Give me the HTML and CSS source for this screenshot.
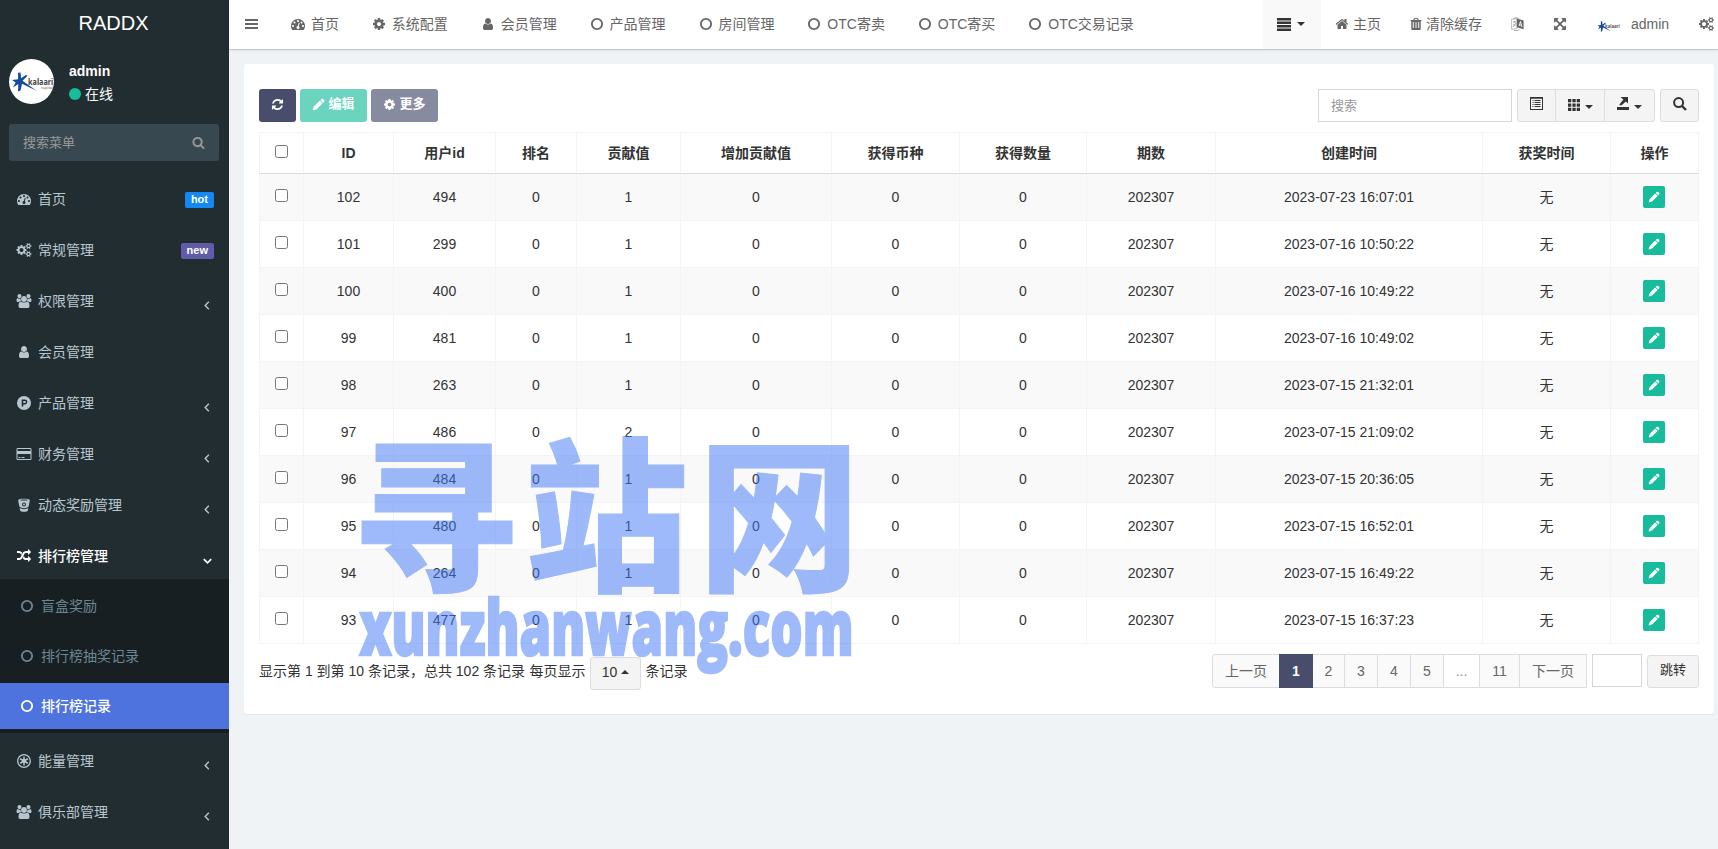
FILE: index.html
```
<!DOCTYPE html>
<html lang="zh">
<head>
<meta charset="utf-8">
<title>RADDX</title>
<link rel="stylesheet" href="styles.css">
</head>
<body>
<svg class="defs" aria-hidden="true">
<symbol id="dash" viewBox="0 0 1792 1792"><path d="M384 1152q0-53-37.5-90.5t-90.5-37.5-90.5 37.5-37.5 90.5 37.5 90.5 90.5 37.5 90.5-37.5 37.5-90.5zm192-448q0-53-37.5-90.5t-90.5-37.5-90.5 37.5-37.5 90.5 37.5 90.5 90.5 37.5 90.5-37.5 37.5-90.5zm428 481l101-382q6-26-7.5-48.5t-38.5-29.5-48 6.5-30 39.5l-101 382q-60 5-107 43.5t-63 98.5q-20 77 20 146t117 89 146-20 89-117q16-60-6-117t-72-91zm660-33q0-53-37.5-90.5t-90.5-37.5-90.5 37.5-37.5 90.5 37.5 90.5 90.5 37.5 90.5-37.5 37.5-90.5zm-640-640q0-53-37.5-90.5t-90.5-37.5-90.5 37.5-37.5 90.5 37.5 90.5 90.5 37.5 90.5-37.5 37.5-90.5zm448 192q0-53-37.5-90.5t-90.5-37.5-90.5 37.5-37.5 90.5 37.5 90.5 90.5 37.5 90.5-37.5 37.5-90.5zm320 448q0 261-141 483-19 29-54 29h-1402q-35 0-54-29-141-221-141-483 0-182 71-348t191-286 286-191 348-71 348 71 286 191 191 286 71 348z"/></symbol>
<symbol id="cog" viewBox="0 0 1792 1792"><path d="M1152 896q0-106-75-181t-181-75-181 75-75 181 75 181 181 75 181-75 75-181zm512-109v222q0 12-8 23t-20 13l-185 28q-19 54-39 91 35 50 107 138 10 12 10 25t-9 23q-27 37-99 108t-94 71q-12 0-26-9l-138-108q-44 23-91 38-16 136-29 186-7 28-36 28h-222q-14 0-24.5-8.5t-11.5-21.5l-28-184q-49-16-90-37l-141 107q-10 9-25 9-14 0-25-11-126-114-165-168-7-10-7-23 0-12 8-23 15-21 51-66.5t54-70.5q-27-50-41-99l-183-27q-13-2-21-12.5t-8-23.5v-222q0-12 8-23t19-13l186-28q14-46 39-92-40-57-107-138-10-12-10-24 0-10 9-23 26-36 98.5-107.5t94.5-71.5q13 0 26 10l138 107q44-23 91-38 16-136 29-186 7-28 36-28h222q14 0 24.5 8.5t11.5 21.5l28 184q49 16 90 37l142-107q9-9 24-9 13 0 25 10 129 119 165 170 7 8 7 22 0 12-8 23-15 21-51 66.5t-54 70.5q26 50 41 98l183 28q13 2 21 12.5t8 23.5z"/></symbol>
<symbol id="user" viewBox="0 0 1792 1792"><path d="M1536 1399q0 109-62.5 187t-150.5 78h-854q-88 0-150.5-78t-62.5-187q0-85 8.5-160.5t31.5-152 58.5-131 94-89 134.5-34.5q131 128 313 128t313-128q76 0 134.5 34.5t94 89 58.5 131 31.5 152 8.5 160.5zm-256-887q0 159-112.5 271.5t-271.5 112.5-271.5-112.5-112.5-271.5 112.5-271.5 271.5-112.5 271.5 112.5 112.5 271.5z"/></symbol>
<symbol id="ring" viewBox="0 0 1792 1792"><circle cx="896" cy="896" r="656" fill="none" stroke="currentColor" stroke-width="240"/></symbol>
<symbol id="home" viewBox="0 0 1792 1792"><path d="M1472 992v480q0 26-19 45t-45 19h-384v-384h-256v384h-384q-26 0-45-19t-19-45v-480q0-1 .5-3t.5-3l575-474 575 474q1 2 1 6zm223-69l-62 74q-8 9-21 11h-3q-13 0-21-7l-692-577-692 577q-12 8-24 7-13-2-21-11l-62-74q-8-10-7-23.5t11-21.5l719-599q32-26 76-26t76 26l244 204v-195q0-14 9-23t23-9h192q14 0 23 9t9 23v408l219 182q10 8 11 21.5t-7 23.5z"/></symbol>
<symbol id="trash" viewBox="0 0 1792 1792"><path fill-rule="evenodd" d="M192 384h350l75-180q20-76 100-76h358q80 0 100 76l75 180h350v128h-96v960q0 192-128 192H416q-128 0-128-192V512h-96zm496 0h416l-50-120H738zM480 640v768h128V640zm352 0v768h128V640zm352 0v768h128V640z"/></symbol>
<symbol id="arrows" viewBox="0 0 1792 1792"><path d="M1411 541l-355 355 355 355 144-144q29-31 70-14 39 17 39 59v448q0 26-19 45t-45 19h-448q-42 0-59-40-17-39 14-69l144-144-355-355-355 355 144 144q31 30 14 69-17 40-59 40h-448q-26 0-45-19t-19-45v-448q0-42 40-59 39-17 69 14l144 144 355-355-355-355-144 144q-19 19-45 19-12 0-24-5-40-17-40-59v-448q0-26 19-45t45-19h448q42 0 59 40 17 39-14 69l-144 144 355 355 355-355-144-144q-31-30-14-69 17-40 59-40h448q26 0 45 19t19 45v448q0 42-39 59-13 5-25 5-26 0-45-19z"/></symbol>
<symbol id="cogs" viewBox="0 0 1920 1792"><path d="M896 896q0-106-75-181t-181-75-181 75-75 181 75 181 181 75 181-75 75-181zm768 512q0-52-38-90t-90-38-90 38-38 90q0 53 37.5 90.5t90.5 37.5 90.5-37.5 37.5-90.5zm0-1024q0-52-38-90t-90-38-90 38-38 90q0 53 37.5 90.5t90.5 37.5 90.5-37.5 37.5-90.5zm-384 421v185q0 10-7 19.5t-16 10.5l-155 24q-11 35-32 76 34 48 90 115 7 11 7 20 0 12-7 19-23 30-82.5 89.5t-78.5 59.5q-11 0-21-7l-115-90q-37 19-77 31-11 108-23 155-7 24-30 24h-186q-11 0-20-7.5t-10-17.5l-23-153q-34-10-75-31l-118 89q-7 7-20 7-11 0-21-8-144-133-144-160 0-9 7-19 10-14 41-53t47-61q-23-44-35-82l-152-24q-10-1-17-9.5t-7-19.5v-185q0-10 7-19.5t16-10.5l155-24q11-35 32-76-34-48-90-115-7-11-7-20 0-12 7-20 22-30 82-89t79-59q11 0 21 7l115 90q34-18 77-32 11-108 23-154 7-24 30-24h186q11 0 20 7.5t10 17.5l23 153q34 10 75 31l118-89q8-7 20-7 11 0 21 8 144 133 144 160 0 8-7 19-12 16-42 54t-45 60q23 48 34 82l152 23q10 2 17 10.5t7 19.5zm640 533v140q0 16-149 31-12 27-30 52 51 113 51 138 0 4-4 7-122 71-124 71-8 0-46-47t-52-68q-20 2-30 2t-30-2q-14 21-52 68t-46 47q-2 0-124-71-4-3-4-7 0-25 51-138-18-25-30-52-149-15-149-31v-140q0-16 149-31 13-29 30-52-51-113-51-138 0-4 4-7 4-2 35-20t59-34 30-16q8 0 46 46.5t52 67.5q20-2 30-2t30 2q51-71 92-112l6-2q4 0 124 70 4 3 4 7 0 25-51 138 17 23 30 52 149 15 149 31zm0-1024v140q0 16-149 31-12 27-30 52 51 113 51 138 0 4-4 7-122 71-124 71-8 0-46-47t-52-68q-20 2-30 2t-30-2q-14 21-52 68t-46 47q-2 0-124-71-4-3-4-7 0-25 51-138-18-25-30-52-149-15-149-31v-140q0-16 149-31 13-29 30-52-51-113-51-138 0-4 4-7 4-2 35-20t59-34 30-16q8 0 46 46.5t52 67.5q20-2 30-2t30 2q51-71 92-112l6-2q4 0 124 70 4 3 4 7 0 25-51 138 17 23 30 52 149 15 149 31z"/></symbol>
<symbol id="group" viewBox="0 0 1920 1792"><path d="M593 896q-162 5-265 128h-134q-82 0-138-40.5t-56-118.5q0-353 124-353 6 0 43.5 21t97.5 42.5 119 21.5q67 0 133-23-5 37-5 66 0 139 81 256zm1071 637q0 120-73 189.5t-194 69.5h-874q-121 0-194-69.5t-73-189.5q0-53 3.5-103.5t14-109 26.5-108.5 43-97.5 62-81 85.5-53.5 111.5-20q10 0 43 21.5t73 48 107 48 135 21.5 135-21.5 107-48 73-48 43-21.5q61 0 111.5 20t85.5 53.5 62 81 43 97.5 26.5 108.5 14 109 3.5 103.5zm-1024-1277q0 106-75 181t-181 75-181-75-75-181 75-181 181-75 181 75 75 181zm704 384q0 159-112.5 271.5t-271.5 112.5-271.5-112.5-112.5-271.5 112.5-271.5 271.5-112.5 271.5 112.5 112.5 271.5zm576 225q0 78-56 118.5t-138 40.5h-134q-103-123-265-128 81-117 81-256 0-29-5-66 66 23 133 23 59 0 119-21.5t97.5-42.5 43.5-21q124 0 124 353zm-128-609q0 106-75 181t-181 75-181-75-75-181 75-181 181-75 181 75 75 181z"/></symbol>
<symbol id="random" viewBox="0 0 1792 1792"><path d="M666 481q-60 92-137 273-22-45-37-72.5t-40.5-63.5-51-56.5-63-35-81.5-14.5h-224q-14 0-23-9t-9-23v-192q0-14 9-23t23-9h224q250 0 410 225zm1126 799q0 14-9 23l-320 320q-9 9-23 9-13 0-22.5-9.5t-9.5-22.5v-192q-32 0-85 .5t-81 1-73-1-71-5-64-10.5-63-18.5-58-28.5-59-40-55-53.5-56-69.5q59-93 136-273 22 45 37 72.5t40.5 63.5 51 56.5 63 35 81.5 14.5h256v-192q0-14 9-23t23-9q12 0 24 10l319 319q9 9 9 23zm0-896q0 14-9 23l-320 320q-9 9-23 9-13 0-22.5-9.5t-9.5-22.5v-192h-256q-48 0-87 15t-69 45-51 61.5-45 77.5q-32 62-78 171-29 66-49.5 111t-54 105-64 100-74 83-90 68.5-106.5 42-128 16.5h-224q-14 0-23-9t-9-23v-192q0-14 9-23t23-9h224q48 0 87-15t69-45 51-61.5 45-77.5q32-62 78-171 29-66 49.5-111t54-105 64-100 74-83 90-68.5 106.5-42 128-16.5h256v-192q0-14 9-23t23-9q12 0 24 10l319 319q9 9 9 23z"/></symbol>
<symbol id="refresh" viewBox="0 0 1792 1792"><path d="M1639 1056q0 5-1 7-64 268-268 434.5t-478 166.5q-146 0-282.5-55t-243.5-157l-129 129q-19 19-45 19t-45-19-19-45v-448q0-26 19-45t45-19h448q26 0 45 19t19 45-19 45l-137 137q71 66 161 102t187 36q134 0 250-65t186-179q11-17 53-117 8-23 30-23h192q13 0 22.5 9.5t9.5 22.5zm25-800v448q0 26-19 45t-45 19h-448q-26 0-45-19t-19-45 19-45l138-138q-148-137-349-137-134 0-250 65t-186 179q-11 17-53 117-8 23-30 23h-199q-13 0-22.5-9.5t-9.5-22.5v-7q65-268 270-434.5t480-166.5q146 0 284 55.5t245 156.5l130-129q19-19 45-19t45 19 19 45z"/></symbol>
<symbol id="pencil" viewBox="0 0 12 12"><path d="M8.600 1.100q.9-.9 1.800 0l.7.7q.9.9 0 1.800l-.9.9-2.500-2.500zM7.100 2.600l2.500 2.500-5.300 5.200q-1.200.9-3.600 1.100.2-2.300 1.100-3.500z"/></symbol>
<symbol id="search" viewBox="0 0 1792 1792"><path d="M1216 832q0-185-131.5-316.5t-316.5-131.5-316.5 131.5-131.5 316.5 131.5 316.5 316.5 131.5 316.5-131.5 131.5-316.5zm512 832q0 52-38 90t-90 38q-54 0-90-38l-343-342q-179 124-399 124-143 0-273.5-55.5t-225-150-150-225-55.5-273.5 55.5-273.5 150-225 225-150 273.5-55.5 273.5 55.5 225 150 150 225 55.5 273.5q0 220-124 399l343 343q37 37 37 90z"/></symbol>
<symbol id="product" viewBox="0 0 14 14"><path fill-rule="evenodd" d="M7 0a7 7 0 1 1 0 14A7 7 0 0 1 7 0zM4.700 3.500v7h1.600V8.400h1.600a2.450 2.450 0 0 0 0-4.900zM6.300 5h1.600a.9.9 0 0 1 0 1.900H6.300z"/></symbol>
<symbol id="card" viewBox="0 0 15 14"><path fill-rule="evenodd" d="M1.200 1h12.600A1.200 1.200 0 0 1 15 2.200v9.600a1.200 1.200 0 0 1-1.200 1.200H1.200A1.200 1.200 0 0 1 0 11.800V2.200A1.200 1.200 0 0 1 1.200 1zM1 2v2h13V2zm0 5v5h13V7zm1 3h2v1H2zm3 0h3v1H5z"/></symbol>
<symbol id="bucket" viewBox="0 0 14 14"><path fill-rule="evenodd" d="M1.200 2C1.200.4 12.800.4 12.800 2c0 1-.8 5-1.200 6.600-.3.7-2 1.600-4.600 1.600S2.700 9.300 2.400 8.600C2 7 1.200 3 1.200 2zM3 2c0 .8 8 .8 8 0s-8-.8-8 0zm4 2.600a2 2 0 1 0 0 4 2 2 0 0 0 0-4z"/><circle cx="7" cy="6.600" r="1"/><path d="M2.600 10c2 1.500 6.800 1.500 8.800 0l-.5 2.500c-.6 1.800-7.200 1.800-7.800 0z"/></symbol>
<symbol id="empire" viewBox="0 0 14 14"><circle cx="7" cy="7" r="6.300" fill="none" stroke="currentColor" stroke-width="1.300"/><circle cx="7" cy="7" r="2.100"/><path d="M7 2.500v9M3.100 4.750l7.800 4.500M3.100 9.250l7.800-4.500" stroke="currentColor" stroke-width="1.500"/></symbol>
<symbol id="star-logo" viewBox="0 0 40 20"><path fill="#114a9f" d="M6 .8L8.500.5l.6 5.700L13.800 3l1.700.7-5 5L24.500 18.800 10 11.800 8.500 18.500 6 19.500l.3-7.500L1 15.500l2.600-5L0 8l6.200-.8z"/></symbol>
</svg>

<aside class="side">
  <div class="brand">RADDX</div>
  <div class="profile">
    <div class="avatar"><svg class="mark"><use href="#star-logo"/></svg><span class="mark-name">kalaari</span><span class="mark-sub">capital</span></div>
    <div class="who"><b>admin</b><span><i class="dot"></i>在线</span></div>
  </div>
  <div class="find"><span>搜索菜单</span><svg class="i13"><use href="#search"/></svg></div>
  <nav class="menu">
    <a><svg class="mi"><use href="#dash"/></svg>首页<em class="hot">hot</em></a>
    <a><svg class="mi"><use href="#cogs"/></svg>常规管理<em class="new">new</em></a>
    <a><svg class="mi"><use href="#group"/></svg>权限管理<svg class="ang" viewBox="0 0 6 9"><path d="M4.800.8L1.200 4.500l3.600 3.700"/></svg></a>
    <a><svg class="mi"><use href="#user"/></svg>会员管理</a>
    <a><svg class="mi"><use href="#product"/></svg>产品管理<svg class="ang" viewBox="0 0 6 9"><path d="M4.800.8L1.200 4.500l3.600 3.700"/></svg></a>
    <a><svg class="mi"><use href="#card"/></svg>财务管理<svg class="ang" viewBox="0 0 6 9"><path d="M4.800.8L1.200 4.500l3.600 3.700"/></svg></a>
    <a><svg class="mi"><use href="#bucket"/></svg>动态奖励管理<svg class="ang" viewBox="0 0 6 9"><path d="M4.800.8L1.200 4.500l3.600 3.700"/></svg></a>
    <a class="open"><svg class="mi"><use href="#random"/></svg>排行榜管理<svg class="ang down" viewBox="0 0 9 6"><path d="M.8 1.200l3.700 3.600 3.700-3.600"/></svg></a>
    <div class="sub">
      <a><svg class="i14"><use href="#ring"/></svg>盲盒奖励</a>
      <a><svg class="i14"><use href="#ring"/></svg>排行榜抽奖记录</a>
      <a class="on"><svg class="i14"><use href="#ring"/></svg>排行榜记录</a>
    </div>
    <a><svg class="mi"><use href="#empire"/></svg>能量管理<svg class="ang" viewBox="0 0 6 9"><path d="M4.800.8L1.200 4.500l3.600 3.700"/></svg></a>
    <a><svg class="mi"><use href="#group"/></svg>俱乐部管理<svg class="ang" viewBox="0 0 6 9"><path d="M4.800.8L1.200 4.500l3.600 3.700"/></svg></a>
  </nav>
</aside>

<div class="page">
<header class="top">
  <svg class="bars" viewBox="0 0 13 10"><path d="M0 0h13v2H0zM0 4h13v2H0zM0 8h13v2H0z"/></svg>
  <nav class="tabs">
    <a><svg class="ti"><use href="#dash"/></svg>首页</a>
    <a><svg class="ti"><use href="#cog"/></svg>系统配置</a>
    <a><svg class="ti"><use href="#user"/></svg>会员管理</a>
    <a><svg class="ti"><use href="#ring"/></svg>产品管理</a>
    <a><svg class="ti"><use href="#ring"/></svg>房间管理</a>
    <a><svg class="ti"><use href="#ring"/></svg>OTC寄卖</a>
    <a><svg class="ti"><use href="#ring"/></svg>OTC寄买</a>
    <a><svg class="ti"><use href="#ring"/></svg>OTC交易记录</a>
  </nav>
  <div class="tools">
    <div class="drop"><svg class="list" viewBox="0 0 14 13"><path d="M0 0h14v2.500H0zM0 3.500h14V6H0zM0 7h14v2.500H0zM0 10.500h14V13H0z"/></svg><i class="caret"></i></div>
    <a class="t-home"><svg class="i14"><use href="#home"/></svg>主页</a>
    <a class="t-clear"><svg class="i14"><use href="#trash"/></svg>清除缓存</a>
    <svg class="lang" viewBox="0 0 13 14"><path d="M.6 2.200l5.400-.6v9.800l-5.400.9z" fill="none" stroke="currentColor" stroke-width=".6" opacity=".7"/><path d="M2 5h3M3.500 4v1.500M2 10l3-4M2.500 7l2 2M2.500 1.500L6 .5l1.500 1M3 13.300l3.500.2 2-1" fill="none" stroke="currentColor" stroke-width=".7" opacity=".8"/><path d="M5.800 1.500L12.600 3.500v8.700L5.800 10.300z"/><path d="M8 9l1.500-4.500L11 10M8.500 7.800l2 .4" fill="none" stroke="#fff" stroke-width=".9"/></svg>
    <svg class="i14 t-full"><use href="#arrows"/></svg>
    <span class="mini"><svg class="mini-mark"><use href="#star-logo"/></svg><span>kalaari</span></span>
    <span class="t-name">admin</span>
    <svg class="t-cogs"><use href="#cogs"/></svg>
  </div>
</header>

<main class="panel">
  <div class="bar">
    <button class="btn dark"><svg class="i13"><use href="#refresh"/></svg></button>
    <button class="btn green"><svg class="i13"><use href="#pencil"/></svg>编辑</button>
    <button class="btn grey"><svg class="i13"><use href="#cog"/></svg>更多</button>
    <div class="query">搜索</div>
    <div class="group">
      <button><svg width="13" height="13" viewBox="0 0 13 13"><path fill-rule="evenodd" d="M0 0h13v13H0zm1 1.800V12h11V1.800zM2.500 3h1v1h-1zm2 0h6v1h-6zm-2 2h1v1h-1zm2 0h6v1h-6zm-2 2h1v1h-1zm2 0h6v1h-6zm-2 2h1v1h-1zm2 0h6v1h-6z"/></svg></button>
      <button><svg width="12" height="12" viewBox="0 0 12 12"><path d="M0 0h3.300v3.300H0zM4.400 0h3.300v3.300H4.400zM8.700 0H12v3.300H8.700zM0 4.400h3.300v3.300H0zM4.400 4.400h3.300v3.300H4.400zM8.700 4.400H12v3.300H8.700zM0 8.700h3.300V12H0zM4.400 8.700h3.300V12H4.400zM8.700 8.700H12V12H8.700z"/></svg><i class="caret"></i></button>
      <button><svg width="12" height="13" viewBox="0 0 12 13"><path d="M0 10h12v3H0zM3.500 0H11v6.500L8.800 4.400 5.800 7.300 4.500 8.200H2.200l1-1.600L6.400 2.600z"/></svg><i class="caret"></i></button>
    </div>
    <button class="seek"><svg width="14" height="14" viewBox="0 0 14 14"><circle cx="5.600" cy="5.600" r="4.500" fill="none" stroke="#333" stroke-width="2"/><path d="M9 9l4 4" stroke="#333" stroke-width="2.400"/></svg></button>
  </div>

  <table class="grid">
    <colgroup><col class="c44"><col class="c90"><col class="c102"><col class="c81"><col class="c104"><col class="c151"><col class="c128"><col class="c127"><col class="c129"><col class="c267"><col class="c128"><col class="c88"></colgroup>
    <thead><tr><th><input type="checkbox"></th><th>ID</th><th>用户id</th><th>排名</th><th>贡献值</th><th>增加贡献值</th><th>获得币种</th><th>获得数量</th><th>期数</th><th>创建时间</th><th>获奖时间</th><th>操作</th></tr></thead>
    <tbody>
    <tr><td><input type="checkbox"></td><td>102</td><td>494</td><td>0</td><td>1</td><td>0</td><td>0</td><td>0</td><td>202307</td><td>2023-07-23 16:07:01</td><td>无</td><td><span class="edit"><svg><use href="#pencil"/></svg></span></td></tr>
    <tr><td><input type="checkbox"></td><td>101</td><td>299</td><td>0</td><td>1</td><td>0</td><td>0</td><td>0</td><td>202307</td><td>2023-07-16 10:50:22</td><td>无</td><td><span class="edit"><svg><use href="#pencil"/></svg></span></td></tr>
    <tr><td><input type="checkbox"></td><td>100</td><td>400</td><td>0</td><td>1</td><td>0</td><td>0</td><td>0</td><td>202307</td><td>2023-07-16 10:49:22</td><td>无</td><td><span class="edit"><svg><use href="#pencil"/></svg></span></td></tr>
    <tr><td><input type="checkbox"></td><td>99</td><td>481</td><td>0</td><td>1</td><td>0</td><td>0</td><td>0</td><td>202307</td><td>2023-07-16 10:49:02</td><td>无</td><td><span class="edit"><svg><use href="#pencil"/></svg></span></td></tr>
    <tr><td><input type="checkbox"></td><td>98</td><td>263</td><td>0</td><td>1</td><td>0</td><td>0</td><td>0</td><td>202307</td><td>2023-07-15 21:32:01</td><td>无</td><td><span class="edit"><svg><use href="#pencil"/></svg></span></td></tr>
    <tr><td><input type="checkbox"></td><td>97</td><td>486</td><td>0</td><td>2</td><td>0</td><td>0</td><td>0</td><td>202307</td><td>2023-07-15 21:09:02</td><td>无</td><td><span class="edit"><svg><use href="#pencil"/></svg></span></td></tr>
    <tr><td><input type="checkbox"></td><td>96</td><td>484</td><td>0</td><td>1</td><td>0</td><td>0</td><td>0</td><td>202307</td><td>2023-07-15 20:36:05</td><td>无</td><td><span class="edit"><svg><use href="#pencil"/></svg></span></td></tr>
    <tr><td><input type="checkbox"></td><td>95</td><td>480</td><td>0</td><td>1</td><td>0</td><td>0</td><td>0</td><td>202307</td><td>2023-07-15 16:52:01</td><td>无</td><td><span class="edit"><svg><use href="#pencil"/></svg></span></td></tr>
    <tr><td><input type="checkbox"></td><td>94</td><td>264</td><td>0</td><td>1</td><td>0</td><td>0</td><td>0</td><td>202307</td><td>2023-07-15 16:49:22</td><td>无</td><td><span class="edit"><svg><use href="#pencil"/></svg></span></td></tr>
    <tr><td><input type="checkbox"></td><td>93</td><td>477</td><td>0</td><td>1</td><td>0</td><td>0</td><td>0</td><td>202307</td><td>2023-07-15 16:37:23</td><td>无</td><td><span class="edit"><svg><use href="#pencil"/></svg></span></td></tr>
    </tbody>
  </table>

  <div class="foot">
    <div class="info"><span>显示第 1 到第 10 条记录，总共 102 条记录</span><span>每页显示</span><button class="size">10<i class="caret up"></i></button><span>条记录</span></div>
    <div class="pages"><a class="w67">上一页</a><a class="cur">1</a><a class="w32">2</a><a>3</a><a>4</a><a>5</a><a class="gap">...</a><a class="w40">11</a><a class="w66">下一页</a></div>
    <div class="jump"></div>
    <button class="go">跳转</button>
  </div>
</main>
</div>

<svg class="stamp" viewBox="0 0 520 250" aria-hidden="true">
  <g class="stamp-cn">
    <text transform="translate(11 148) scale(1.017 1)">寻</text>
    <text transform="translate(184.400 148) scale(.995 1)">站</text>
    <text transform="translate(358.500 148) scale(.98 1)">网</text>
  </g>
  <text class="stamp-url" x="19.500" y="225" textLength="494" lengthAdjust="spacingAndGlyphs">xunzhanwang.com</text>
</svg>
</body>
</html>
```
FILE: styles.css
```
* { box-sizing: border-box; }
body {
  margin: 0;
  display: flex;
  height: 849px;
  overflow: hidden;
  background: #eff3f6;
  color: #333;
  font: 14px/20px "Liberation Sans", "Noto Sans CJK SC", sans-serif;
}
svg { fill: currentColor; flex: none; display: block; }
button { font: inherit; color: inherit; margin: 0; padding: 0; }
.defs { position: absolute; width: 0; height: 0; }
.i14 { width: 14px; height: 14px; }
.i13 { width: 13px; height: 13px; }
.caret { width: 0; height: 0; border: 4px solid transparent; border-top-color: currentColor; border-bottom: 0; }
.caret.up { border-top: 0; border-bottom: 4px solid currentColor; }

/* sidebar */
.side { width: 229px; height: 849px; background: #222d32; color: #b8c7ce; flex: none; }
.brand { height: 49px; line-height: 47px; text-align: center; padding-right: 2px; font-size: 20px; color: #fff; }
.profile { display: flex; gap: 15px; padding: 10px 9px 0; color: #fff; }
.avatar { width: 45px; height: 45px; border-radius: 50%; background: #fff; position: relative; overflow: hidden; flex: none; }
.mark { position: absolute; left: 3px; top: 13px; width: 40px; height: 20px; }
.mark-name { position: absolute; left: 19px; top: 15px; color: #444; font: bold 8.500px/16px "Noto Sans", sans-serif; transform: scaleX(.86); transform-origin: 0 0; }
.mark-sub { position: absolute; left: 32px; top: 26px; color: #666; font: 4px/6px "Noto Sans", sans-serif; }
.who { display: flex; flex-direction: column; gap: 3px; padding-top: 2px; }
.who span { display: flex; align-items: center; gap: 4px; }
.dot { width: 12px; height: 12px; border-radius: 50%; background: #18bc9c; }
.find {
  margin: 20px 10px 0 9px; height: 37px; padding: 0 14px; border-radius: 3px; background: #374850;
  display: flex; align-items: center; justify-content: space-between; font-size: 13px; color: #999;
}
.menu { padding-top: 10px; }
.menu > a { display: flex; align-items: center; height: 46px; margin-top: 5px; padding: 0 15px 0 16px; }
.mi { width: 16px; height: 14px; margin-right: 6px; }
.menu em { margin: 2px 0 0 auto; height: 16px; padding: 0 6px; border-radius: 2px; color: #fff; font: bold 11px/15px "Liberation Sans", sans-serif; }
.hot { background: #1688f1; }
.new { background: #605ca8; }
.ang { margin: 9px 4px 0 auto; width: 6px; height: 9px; fill: none; stroke: #b8c7ce; stroke-width: 1.400; }
.ang.down { width: 9px; height: 6px; margin-right: 2px; stroke: #fff; stroke-width: 1.700; }
.menu .open { color: #fff; font-weight: 500; }
.sub { background: #181f22; padding: 4px 0; display: flex; flex-direction: column; gap: 4px; color: #6d8792; }
.sub a { display: flex; align-items: center; height: 46px; padding-left: 20px; gap: 7px; }
.sub .on { background: #4e73df; color: #fff; font-weight: 500; }

/* header */
.page { flex: 1; min-width: 0; }
.top { height: 49px; background: #fff; color: #666; display: flex; align-items: center; padding-bottom: 1px; box-shadow: 0 1px 1px rgba(0, 0, 0, .13), 0 1px 4px rgba(0, 0, 0, .07); }
.bars { width: 13px; height: 10px; margin-left: 16px; }
.tabs { display: flex; gap: 31px; margin-left: 31px; white-space: nowrap; }
.tabs a { display: flex; align-items: center; }
.ti { width: 18px; height: 14px; margin-right: 3.900px; }
.tools { display: flex; align-items: center; margin-left: auto; width: 456px; white-space: nowrap; height: 48px; }
.drop { width: 59px; height: 49px; background: #f9f9f9; color: #333; display: flex; align-items: center; padding-left: 15px; gap: 6px; }
.list { width: 14px; height: 13px; }
.tools a { display: flex; align-items: center; }
.t-home { margin-left: 14px; gap: 4px; }
.t-clear { margin-left: 28px; gap: 3px; }
.lang { width: 13px; height: 14px; margin-left: 29px; }
.t-full { margin-left: 29px; }
.mini { display: flex; width: 23px; height: 11px; margin: 4px 0 0 30px; position: relative; }
.mini-mark { width: 23px; height: 11px; }
.mini span { position: absolute; left: 8px; top: 0; font: bold 5px/10px "Noto Sans", sans-serif; color: #555; transform: scaleX(.85); transform-origin: 0 0; }
.t-name { margin-left: 11px; }
.t-cogs { width: 15px; height: 14px; margin-left: 30px; }

/* content */
.panel { margin: 15px 4px 0 15px; height: 650px; padding: 25px 15px 0; border-radius: 3px; background: #fff; box-shadow: 0 1px 1px rgba(0, 0, 0, .05); }
.bar { display: flex; height: 33px; }
.btn { height: 33px; border: 0; border-radius: 3px; color: #fff; font-size: 13px; font-weight: bold; display: flex; align-items: center; justify-content: center; gap: 3px; margin-right: 4px; padding-bottom: 3px; width: 67px; }
.dark { width: 37px; background: #474d6a; }
.green { background: #6bd4bf; }
.grey { background: #868b9f; }
.query { margin-left: auto; width: 194px; border: 1px solid #d2d6de; padding: 0 12px; line-height: 31px; font-size: 13px; color: #999; }
.group { display: flex; margin-left: 5px; border: 1px solid #ddd; border-radius: 3px; background: #f4f4f4; color: #333; }
.group button { width: 49px; border: 0; border-left: 1px solid #ddd; background: none; display: flex; align-items: center; justify-content: center; gap: 5px; padding-bottom: 2px; }
.group button:first-child { width: 37px; border-left: 0; padding-bottom: 4px; }
.group button:last-child { width: 50px; }
.group button:last-child svg { margin-top: -2px; }
.group .caret { margin-top: 4px; }
.seek { margin-left: 5px; width: 39px; border: 1px solid #ddd; border-radius: 3px; background: #f4f4f4; display: flex; align-items: center; justify-content: center; padding-bottom: 3px; }

.grid { width: 1440px; margin-top: 10px; border-collapse: collapse; table-layout: fixed; text-align: center; }
.grid th, .grid td { border: 1px solid #f4f4f4; padding: 0; vertical-align: middle; }
.grid th { height: 41px; border-bottom-color: #ddd; }
.grid td { height: 47px; }
.grid td:last-child { padding-right: 1px; }
.grid tbody tr:nth-child(odd) { background: #f9f9f9; }
.grid input { display: block; width: 13px; height: 13px; margin: -3px auto 0; }
.c44 { width: 44px; } .c90 { width: 90px; } .c102 { width: 102px; } .c81 { width: 81px; }
.c104 { width: 104px; } .c151 { width: 151px; } .c128 { width: 128px; } .c127 { width: 127px; }
.c129 { width: 129px; } .c267 { width: 267px; } .c88 { width: 88px; }
.edit { display: flex; align-items: center; justify-content: center; width: 22px; height: 22px; margin: 0 auto; border-radius: 2px; background: #18bc9c; color: #fff; }
.edit svg { width: 12px; height: 12px; }

.foot { display: flex; margin-top: 10px; }
.info { display: flex; align-items: center; gap: 4.500px; height: 34px; margin-right: auto; }
.size { width: 51px; height: 33px; margin-top: 4px; border: 1px solid #ddd; border-radius: 3px; background: #f4f4f4; display: flex; align-items: center; justify-content: center; gap: 4px; padding-bottom: 3px; }
.pages { display: flex; height: 34px; border: 1px solid #ddd; border-radius: 3px 0 0 3px; background: #fafafa; color: #666; }
.pages a { width: 33px; border-right: 1px solid #ddd; text-align: center; line-height: 32px; }
.pages .w67 { width: 66px; border-right: 0; }
.pages .w32 { width: 32px; }
.pages .cur { width: 34px; margin: -1px 0; line-height: 34px; border: 0; background: #474d6a; color: #fff; font-weight: bold; }
.pages .gap { width: 36px; background: #fff; color: #999; }
.pages .w40 { width: 40px; }
.pages .w66 { width: 66px; border-right: 0; }
.jump { width: 50px; height: 33px; margin-left: 5px; border: 1px solid #d2d6de; }
.go { width: 52px; height: 33px; margin: 1px 0 0 5px; border: 1px solid #ddd; border-radius: 3px; background: #f4f4f4; font-size: 13px; padding-bottom: 3px; }

/* watermark laid over the page */
.stamp { position: absolute; left: 340px; top: 430px; width: 520px; height: 250px; opacity: .5; fill: #3f77f7; stroke: #3f77f7; pointer-events: none; overflow: visible; }
.stamp-cn { font: 900 164.500px "Noto Sans CJK SC", sans-serif; stroke-width: 1px; }
.stamp-url { font: 800 77px "Open Sans", "Noto Sans", sans-serif; stroke-width: 2.500px; }
```
